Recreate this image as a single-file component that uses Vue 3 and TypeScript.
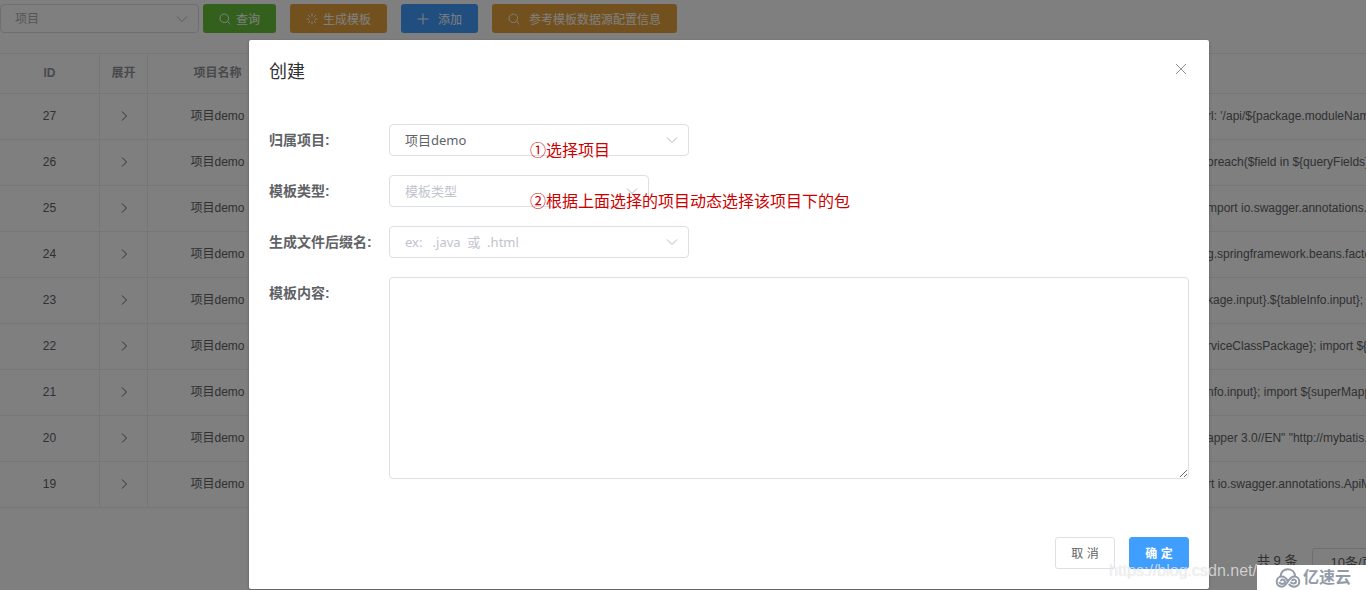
<script setup lang="ts">
import { ref } from 'vue'

interface Row {
  id: number
  lead: string
  code: string
}

const rows: Row[] = [
  { id: 27, lead: 'u', code: "rl: '/api/${package.moduleName}" },
  { id: 26, lead: '#f', code: 'oreach($field in ${queryFields})' },
  { id: 25, lead: 'i', code: 'mport io.swagger.annotations.Api' },
  { id: 24, lead: 'or', code: 'g.springframework.beans.factory' },
  { id: 23, lead: 'pac', code: 'kage.input}.${tableInfo.input}; import' },
  { id: 22, lead: 'Se', code: 'rviceClassPackage}; import ${entity}' },
  { id: 21, lead: 'I', code: 'nfo.input}; import ${superMapper}' },
  { id: 20, lead: 'M', code: 'apper 3.0//EN" "http://mybatis.org' },
  { id: 19, lead: 'impo', code: 'rt io.swagger.annotations.ApiModel' },
]

const project = ref('demo')
const kind = ref('')
const suffix = ref('')
const content = ref('')
</script>

<template>
  <div class="page">
    <div class="toolbar">
      <div class="picker picker-filter">
        <select aria-label="项目">
          <option>项目</option>
        </select>
        <svg class="chevron" viewBox="0 0 12 12"><path d="M1 3.5l5 5 5-5" /></svg>
      </div>
      <button type="button" class="tool success">
        <svg viewBox="0 0 12 12"><circle cx="5.3" cy="5.3" r="4.3" /><path d="M8.5 8.5l2.8 2.8" /></svg>查询
      </button>
      <button type="button" class="tool warning">
        <svg viewBox="0 0 12 12"><path d="M6 .5v3M6 8.5v3M.5 6h3M8.5 6h3M2.1 2.1l2.1 2.1M7.8 7.8l2.1 2.1M9.9 2.1L7.8 4.2M4.2 7.8L2.1 9.9" /></svg>生成模板
      </button>
      <button type="button" class="tool primary wide">
        <svg viewBox="0 0 12 12"><path d="M6 .5v11M.5 6h11" /></svg>添加
      </button>
      <button type="button" class="tool warning wide">
        <svg viewBox="0 0 12 12"><circle cx="5.3" cy="5.3" r="4.3" /><path d="M8.5 8.5l2.8 2.8" /></svg>参考模板数据源配置信息
      </button>
    </div>

    <table class="grid">
      <colgroup>
        <col class="c-id" />
        <col class="c-open" />
        <col class="c-name" />
        <col />
      </colgroup>
      <thead>
        <tr>
          <th>ID</th>
          <th>展开</th>
          <th>项目名称</th>
          <th></th>
        </tr>
      </thead>
      <tbody>
        <tr v-for="row in rows" :key="row.id">
          <td>{{ row.id }}</td>
          <td>
            <button type="button" class="expand" aria-label="展开">
              <svg viewBox="0 0 12 12"><path d="M4 1.5L8.5 6 4 10.5" /></svg>
            </button>
          </td>
          <td>项目demo</td>
          <td>
            <div class="code"><span class="lead">{{ row.lead }}</span><span>{{ row.code }}</span></div>
          </td>
        </tr>
      </tbody>
    </table>

    <div class="pager">
      <span>共 9 条</span>
      <select aria-label="每页条数">
        <option>10条/页</option>
      </select>
    </div>

    <div class="mask">
      <section class="dialog" role="dialog" aria-labelledby="dialog-title">
        <header>
          <h2 id="dialog-title">创建</h2>
          <button type="button" class="close" aria-label="关闭">
            <svg viewBox="0 0 12 12"><path d="M1 1l10 10M11 1L1 11" /></svg>
          </button>
        </header>
        <form @submit.prevent>
          <div class="field">
            <label for="project">归属项目:</label>
            <div class="picker">
              <select id="project" v-model="project">
                <option value="demo">项目demo</option>
              </select>
              <svg class="chevron" viewBox="0 0 12 12"><path d="M1 3.5l5 5 5-5" /></svg>
              <span class="note">①选择项目</span>
            </div>
          </div>
          <div class="field">
            <label for="kind">模板类型:</label>
            <div class="picker picker-short">
              <select id="kind" v-model="kind" class="empty">
                <option value="" disabled>模板类型</option>
              </select>
              <svg class="chevron" viewBox="0 0 12 12"><path d="M1 3.5l5 5 5-5" /></svg>
              <span class="note">②根据上面选择的项目动态选择该项目下的包</span>
            </div>
          </div>
          <div class="field">
            <label for="suffix">生成文件后缀名:</label>
            <div class="picker">
              <select id="suffix" v-model="suffix" class="empty">
                <option value="" disabled>ex:&nbsp;&nbsp; .java&nbsp; 或&nbsp; .html</option>
              </select>
              <svg class="chevron" viewBox="0 0 12 12"><path d="M1 3.5l5 5 5-5" /></svg>
            </div>
          </div>
          <div class="field">
            <label for="content">模板内容:</label>
            <textarea id="content" v-model="content"></textarea>
          </div>
        </form>
        <footer>
          <button type="button">取 消</button>
          <button type="button" class="confirm">确 定</button>
        </footer>
      </section>
    </div>

    <div class="watermark">
      <span>https://blog.csdn.net/</span>
      <div class="brand">
        <svg viewBox="0 0 26 20">
          <path d="M5.500 8.500C5.500 4 9 1.200 12.800 1.200c3.700 0 6.700 2.500 7.200 6.300" />
          <path d="M6 12.500c1-1.500 4-1 4 1.200 0 2.600-4 2.800-5.500 1" />
          <path d="M13 13.500C11.500 10.500 9.500 8.500 6.800 8.500a5.100 5.100 0 1 0 0 10.200c5.700 0 6.200-10.200 12.400-10.200a5.100 5.100 0 1 1 0 10.200c-2.200 0-3.700-.9-4.900-2.200" />
          <path d="M16 14.500c1 1.500 5 1.500 5-1 0-2-2.500-2.500-3.800-1.300" />
        </svg>
        <strong>亿速云</strong>
      </div>
    </div>
  </div>
</template>

<style>
body {
  overflow: hidden;
}
</style>

<style scoped>
.page {
  position: relative;
  min-height: 100vh;
  overflow: hidden;
  background: #fff;
  color: #606266;
  font: 12px/18px "Liberation Sans", "Noto Sans CJK SC", sans-serif;
}
* {
  box-sizing: border-box;
}
svg {
  fill: none;
  stroke: currentColor;
}
button,
select,
textarea {
  font-family: inherit;
}
.toolbar {
  display: flex;
  gap: 14px;
  padding: 4px 0 20px;
}
.picker {
  position: relative;
  width: 300px;
}
.picker select {
  display: block;
  appearance: none;
  width: 100%;
  height: 32px;
  padding: 0 30px 0 15px;
  border: 1px solid #dcdfe6;
  border-radius: 4px;
  background: #fff;
  color: #606266;
  font: 13px "Noto Sans", "Noto Sans CJK SC", sans-serif;
  opacity: 1;
}
.picker .empty {
  color: #c0c4cc;
}
.picker-short {
  width: 260px;
}
.picker-filter {
  width: 199px;
  margin-right: -10px;
}
.picker-filter select {
  height: 29px;
  padding-left: 14px;
  color: #a8abb2;
  font-size: 12px;
}
.chevron {
  position: absolute;
  top: 50%;
  right: 11px;
  width: 12px;
  height: 12px;
  margin-top: -6px;
  color: #b4b8bf;
}
.tool {
  display: flex;
  align-items: center;
  gap: 5px;
  height: 29px;
  padding: 0 16px;
  border: 0;
  border-radius: 3px;
  color: #fff;
  font-size: 12px;
}
.tool svg {
  width: 12px;
  height: 12px;
}
.wide {
  gap: 9px;
}
.success {
  background: #67c23a;
}
.warning {
  background: #e6a23c;
}
.primary {
  background: #409eff;
}
.grid {
  width: 100%;
  table-layout: fixed;
  border-collapse: separate;
  border-spacing: 0;
  border-top: 1px solid #ebeef5;
}
.c-id {
  width: 100px;
}
.c-open {
  width: 48px;
}
.c-name {
  width: 140px;
}
th,
td {
  padding: 0 0 2px;
  border-bottom: 1px solid #ebeef5;
  text-align: center;
  white-space: nowrap;
}
th {
  height: 40px;
  color: #909399;
}
td {
  height: 46px;
}
th:nth-child(-n + 3),
td:nth-child(-n + 3) {
  border-right: 1px solid #ebeef5;
}
.expand {
  display: inline-flex;
  padding: 0;
  border: 0;
  background: none;
  color: #666;
  vertical-align: middle;
}
.expand svg {
  width: 12px;
  height: 12px;
}
.code {
  display: flex;
  overflow: hidden;
}
.lead {
  flex: 0 0 919px;
  text-align: right;
}
.pager {
  display: flex;
  gap: 15px;
  width: 109px;
  margin: 40px 0 0 auto;
  font-size: 13px;
  line-height: 26px;
}
.pager span {
  flex: none;
}
.pager select {
  flex: none;
  appearance: none;
  width: 100px;
  height: 28px;
  padding: 0 17px;
  border: 1px solid #dcdfe6;
  border-radius: 3px;
  background: #fff;
  color: #606266;
  font-size: 13px;
}
.mask {
  position: absolute;
  inset: 0;
  padding: 40px 157px 0 249px;
  background: rgba(0, 0, 0, 0.5);
}
.dialog {
  border-radius: 2px;
  background: #fff;
  box-shadow: 0 1px 3px rgba(0, 0, 0, 0.3);
}
.dialog header {
  display: flex;
  justify-content: space-between;
  padding: 20px 20px 10px;
}
.dialog h2 {
  margin: 0;
  color: #303133;
  font-size: 18px;
  font-weight: 400;
  line-height: 24px;
}
.close {
  display: flex;
  align-items: center;
  height: 18px;
  padding: 0 2px;
  border: 0;
  background: none;
  color: #909399;
}
.close svg {
  width: 12px;
  height: 12px;
}
form {
  display: grid;
  gap: 19px;
  padding: 30px 20px;
}
.field {
  display: flex;
}
label {
  flex: 0 0 120px;
  font-size: 14px;
  font-weight: 700;
  line-height: 32px;
}
textarea {
  flex: 1;
  height: 202px;
  padding: 5px 15px;
  border: 1px solid #dcdfe6;
  border-radius: 4px;
  color: #606266;
  font-size: 14px;
  resize: vertical;
}
.note {
  position: absolute;
  top: 15px;
  left: 141px;
  color: #c00;
  font-size: 16px;
  line-height: 20px;
  white-space: nowrap;
  font-family: "Noto Sans CJK SC", sans-serif;
  z-index: 1;
}
footer {
  display: flex;
  justify-content: flex-end;
  gap: 14px;
  padding: 28px 20px 20px;
}
footer button {
  width: 60px;
  height: 32px;
  padding: 0 0 2px;
  border: 1px solid #dcdfe6;
  border-radius: 3px;
  background: #fff;
  color: #606266;
  font-size: 12px;
}
footer .confirm {
  border-color: #409eff;
  background: #409eff;
  color: #fff;
  font-weight: 700;
}
.watermark {
  position: absolute;
  right: 0;
  bottom: 0;
  display: flex;
  align-items: flex-end;
}
.watermark > span {
  color: rgba(255, 255, 255, 0.7);
  font-size: 16px;
  line-height: 38px;
  text-shadow: 0 0 1px rgba(0, 0, 0, 0.2);
}
.brand {
  display: flex;
  align-items: center;
  gap: 2px;
  width: 109px;
  height: 25px;
  padding-left: 18px;
  background: #fff;
  color: #929aa8;
}
.brand svg {
  width: 26px;
  height: 20px;
  stroke-width: 2;
  stroke-linecap: round;
}
.brand strong {
  font-size: 16px;
}
</style>
